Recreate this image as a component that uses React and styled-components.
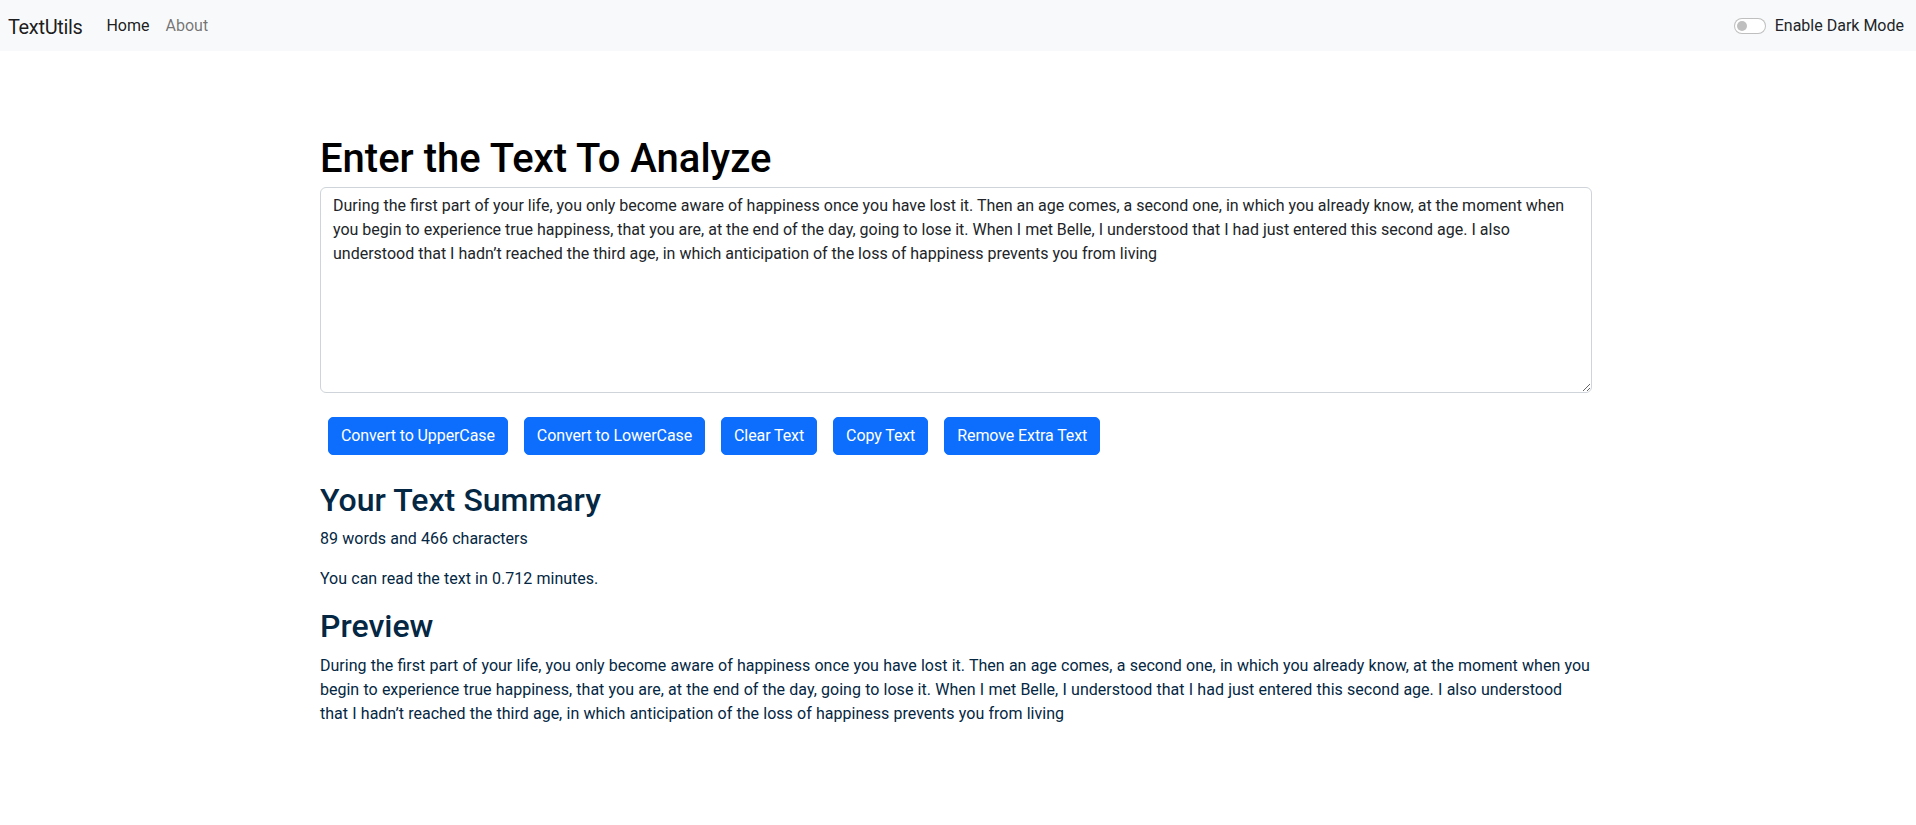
import { useState } from 'react';
import styled, { createGlobalStyle, css } from 'styled-components';

const SAMPLE =
    "During the first part of your life, you only become aware of happiness once you have lost it. Then an age comes, a second one, in which you already know, at the moment when you begin to experience true happiness, that you are, at the end of the day, going to lose it. When I met Belle, I understood that I had just entered this second age. I also understood that I hadn’t reached the third age, in which anticipation of the loss of happiness prevents you from living";

export default function App() {
    const [text, setText] = useState(SAMPLE);
    const [dark, setDark] = useState(false);

    const words = text.split(/\s+/).filter(w => w.length !== 0).length;

    return (
        <>
            <GlobalStyle />
            <Navbar>
                <Brand href="#">TextUtils</Brand>
                <NavList>
                    <NavLink href="#" active>Home</NavLink>
                    <NavLink href="#">About</NavLink>
                </NavList>
                <SwitchWrap onClick={() => setDark(!dark)}>
                    <Track on={dark}>
                        <Knob on={dark} />
                    </Track>
                    <SwitchLabel>Enable Dark Mode</SwitchLabel>
                </SwitchWrap>
            </Navbar>

            <Main>
                <Heading>Enter the Text To Analyze</Heading>
                <TextBox rows={8} value={text} onChange={e => setText(e.target.value)} />
                <ButtonRow>
                    <Button onClick={() => setText(text.toUpperCase())}>Convert to UpperCase</Button>
                    <Button onClick={() => setText(text.toLowerCase())}>Convert to LowerCase</Button>
                    <Button onClick={() => setText("")}>Clear Text</Button>
                    <Button>Copy Text</Button>
                    <Button onClick={() => setText(text.split(/[ ]+/).join(" "))}>Remove Extra Text</Button>
                </ButtonRow>

                <Summary>
                    <SubHeading>Your Text Summary</SubHeading>
                    <Para>{words} words and {text.length} characters</Para>
                    <Para>You can read the text in {(0.008 * words).toFixed(3)} minutes.</Para>
                    <SubHeading>Preview</SubHeading>
                    <Para>{text.length > 0 ? text : "Nothing to preview!"}</Para>
                </Summary>
            </Main>
        </>
    );
}

const GlobalStyle = createGlobalStyle`
    body {
        margin: 0;
        background: #fff;
        color: #212529;
        font-family: Roboto, "Noto Sans", "Liberation Sans", sans-serif;
        font-size: 16px;
        line-height: 1.5;
    }
`;

const Navbar = styled.nav`
    display: flex;
    align-items: center;
    height: 51px;
    padding: 0 12px 0 8px;
    background-color: #f8f9fa;
`;

const Brand = styled.a`
    font-size: 20px;
    line-height: 30px;
    letter-spacing: -0.35px;
    color: rgba(0, 0, 0, 0.9);
    text-decoration: none;
    margin-right: 16px;
    padding-top: 2px;
`;

const NavList = styled.div`
    display: flex;
`;

const NavLink = styled.a`
    padding: 8px;
    color: rgba(0, 0, 0, 0.55);
    text-decoration: none;
    ${({ active }) => active && css`
        color: rgba(0, 0, 0, 0.9);
    `}
`;

const SwitchWrap = styled.label`
    margin-left: auto;
    display: flex;
    align-items: center;
    gap: 9px;
    cursor: pointer;
`;

const Track = styled.span`
    position: relative;
    width: 32px;
    height: 16px;
    box-sizing: border-box;
    border: 1px solid rgba(0, 0, 0, 0.25);
    border-radius: 16px;
    background-color: ${({ on }) => (on ? "#0d6efd" : "#fff")};
`;

const Knob = styled.span`
    position: absolute;
    top: 2px;
    left: ${({ on }) => (on ? "18px" : "2px")};
    width: 10px;
    height: 10px;
    border-radius: 50%;
    background-color: ${({ on }) => (on ? "#fff" : "#bfbfbf")};
`;

const SwitchLabel = styled.span`
    color: #212529;
    font-size: 16px;
`;

const Main = styled.main`
    max-width: 1276px;
    box-sizing: border-box;
    margin: 0 auto;
    padding: 84px 4px 40px 0;
`;

const Heading = styled.h1`
    margin: 0 0 4px;
    font-size: 40px;
    font-weight: 500;
    line-height: 1.2;
    color: #000;
`;

const TextBox = styled.textarea`
    display: block;
    width: 100%;
    box-sizing: border-box;
    padding: 6px 12px;
    font-family: inherit;
    font-size: 16px;
    line-height: 24px;
    color: #212529;
    background-color: #fff;
    border: 1px solid #ced4da;
    border-radius: 6px;
    outline: none;
`;

const ButtonRow = styled.div`
    display: flex;
    flex-wrap: wrap;
    gap: 16px;
    padding: 8px;
    margin-top: 16px;
`;

const Button = styled.button`
    padding: 6px 12px;
    font-family: inherit;
    font-size: 16px;
    line-height: 24px;
    letter-spacing: -0.1px;
    color: #fff;
    background-color: #0d6efd;
    border: 1px solid #0d6efd;
    border-radius: 5px;
    cursor: pointer;
`;

const Summary = styled.section`
    margin-top: 18px;
    color: #042743;
    word-spacing: 0.28px;
`;

const SubHeading = styled.h2`
    margin: 0 0 8px;
    font-size: 32px;
    font-weight: 500;
    line-height: 1.2;
`;

const Para = styled.p`
    margin: 0 0 16px;
`;
